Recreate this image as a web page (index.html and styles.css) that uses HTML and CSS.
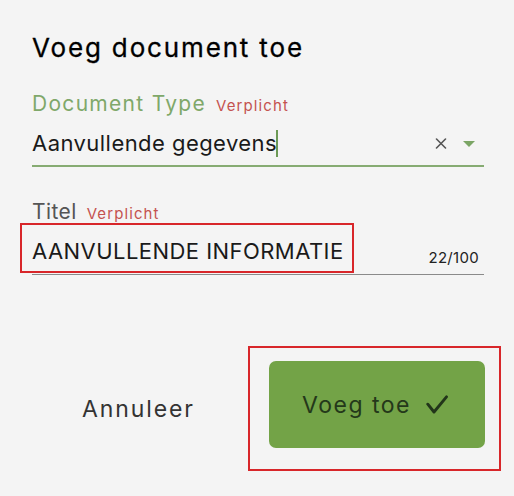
FILE: index.html
```html
<!DOCTYPE html>
<html>
<head>
<meta charset="utf-8">
<link rel="stylesheet" href="styles.css">
</head>
<body>
<div class="dialog">
  <h1 class="title">Voeg document toe</h1>
  <div class="field field-type">
    <div class="label"><span class="label-text green">Document Type</span><span class="req">Verplicht</span></div>
    <div class="input input-select">
      <span class="value">Aanvullende gegevens<span class="caret"></span></span>
      <svg class="clear" viewBox="0 0 12 11" width="12" height="11"><path d="M1.5 1 L10.5 10 M10.5 1 L1.5 10" stroke="#555" stroke-width="1.6" stroke-linecap="round"/></svg>
      <span class="arrow"></span>
    </div>
  </div>
  <div class="field field-title">
    <div class="label"><span class="label-text gray">Titel</span><span class="req">Verplicht</span></div>
    <div class="input input-text">
      <span class="value marked">AANVULLENDE INFORMATIE</span>
      <span class="counter">22/100</span>
    </div>
  </div>
  <div class="actions">
    <button class="btn-cancel">Annuleer</button>
    <div class="mark-box">
      <button class="btn-add"><span class="btn-label">Voeg toe</span>
        <svg class="check" viewBox="0 0 22 19" width="22" height="19"><path d="M1.8 9.2 L8 17 L20.5 1.8" fill="none" stroke="#22351a" stroke-width="2.9" stroke-linecap="round" stroke-linejoin="round"/></svg>
      </button>
    </div>
  </div>
</div>
</body>
</html>
```

FILE: styles.css
```css
html, body {
  margin: 0;
  padding: 0;
  background: #f4f4f4;
}
body {
  width: 514px;
  height: 496px;
  overflow: hidden;
  font-family: Inter, "Open Sans", sans-serif;
  color: #1a1a1a;
}
.dialog {
  padding: 33px 30px 0 32px;
}
.title {
  margin: 0;
  height: 30px;
  font-size: 26px;
  font-weight: 400;
  line-height: 30px;
  color: #000;
  letter-spacing: 1.85px;
  -webkit-text-stroke: 0.3px #000;
}
.field-type {
  margin-top: 29px;
}
.label {
  display: flex;
  align-items: baseline;
  height: 24px;
  line-height: 24px;
}
.label-text {
  font-size: 21px;
  font-weight: 400;
  letter-spacing: 1.3px;
}
.green { color: #7fa86a; }
.gray {
  color: #555;
  letter-spacing: 0.4px;
}
.req {
  margin-left: 10px;
  font-size: 15px;
  letter-spacing: 1.1px;
  color: #c4524f;
}
.input {
  display: flex;
  position: relative;
}
.input-select {
  align-items: center;
  height: 28px;
  padding: 13px 0 8px;
  border-bottom: 2px solid #86ab72;
}
.value {
  font-size: 22px;
  letter-spacing: 0.45px;
  color: #1a1a1a;
  line-height: 28px;
}
.caret {
  display: inline-block;
  width: 2px;
  height: 27px;
  background: #6c9a56;
  vertical-align: -6px;
  margin-left: -1px;
}
.clear {
  display: block;
  margin-left: auto;
  margin-right: 16px;
}
.arrow {
  width: 0;
  height: 0;
  border-left: 6px solid transparent;
  border-right: 6px solid transparent;
  border-top: 6px solid #7ba565;
  margin-right: 9px;
  margin-top: 1px;
}
.field-title {
  margin-top: 33px;
}
.input-text {
  align-items: flex-start;
  height: 51px;
  margin-top: -1px;
  border-bottom: 1px solid #8a8a8a;
}
.marked {
  margin-left: -12px;
  padding: 12px 8px 6px 10px;
  border: 2px solid #d8262a;
}
.counter {
  margin-left: auto;
  margin-right: 5px;
  margin-top: 26px;
  font-size: 15px;
  line-height: 18px;
  letter-spacing: 0.3px;
  color: #222;
}
.actions {
  display: flex;
  align-items: center;
  margin-top: 71px;
}
.btn-cancel {
  border: none;
  background: none;
  font-family: inherit;
  font-size: 23px;
  letter-spacing: 1.9px;
  color: #333;
  padding: 0;
  margin-left: 50px;
}
.mark-box {
  border: 2px solid #d8262a;
  padding: 13px 14px 21px 19px;
  margin-left: auto;
  margin-right: -17px;
}
.btn-add {
  width: 216px;
  height: 87px;
  border: none;
  border-radius: 7px;
  background: #73a347;
  color: #24381a;
  font-family: inherit;
  font-size: 23px;
  letter-spacing: 1.5px;
  display: flex;
  align-items: center;
  justify-content: center;
  gap: 15px;
  padding: 0 4px 0 0;
}
.check {
  display: block;
}
```
